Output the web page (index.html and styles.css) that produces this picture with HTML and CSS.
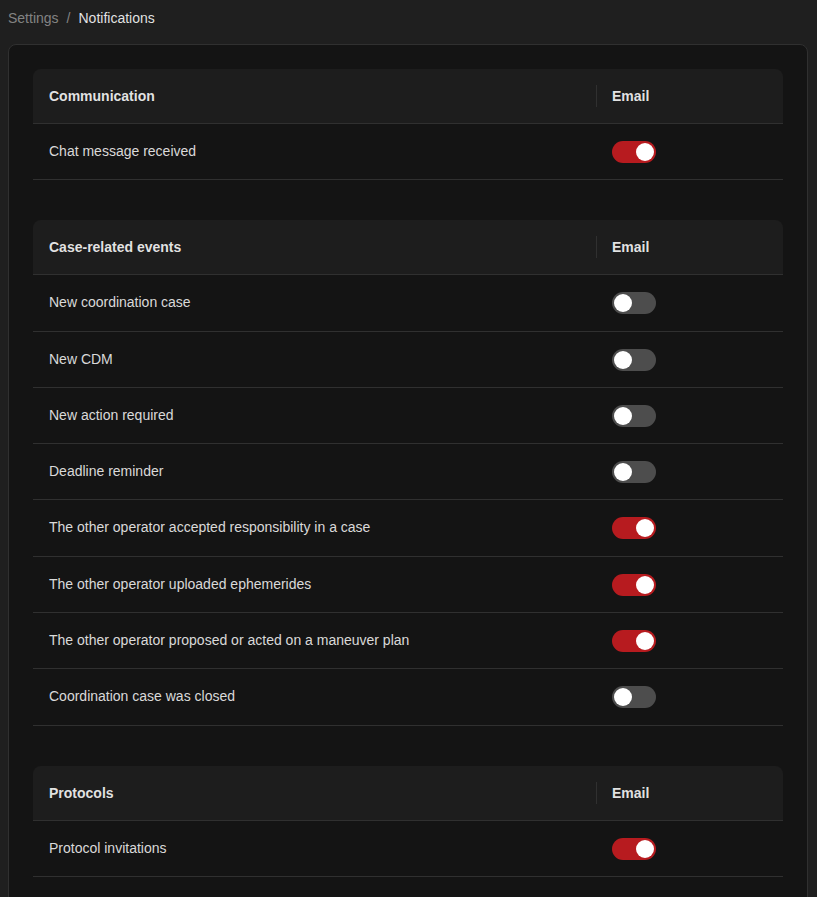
FILE: index.html
```html
<!DOCTYPE html>
<html>
<head>
<meta charset="utf-8">
<link rel="stylesheet" href="styles.css">
</head>
<body>
<nav class="crumbs"><span class="crumb-link">Settings</span><span class="sep">/</span><span class="crumb-current">Notifications</span></nav>
<main class="card">
  <section class="table">
    <div class="thead"><div class="cell name">Communication</div><div class="cell col">Email</div></div>
    <div class="row"><div class="cell name">Chat message received</div><div class="cell col"><span class="switch on"></span></div></div>
  </section>
  <section class="table">
    <div class="thead"><div class="cell name">Case-related events</div><div class="cell col">Email</div></div>
    <div class="row"><div class="cell name">New coordination case</div><div class="cell col"><span class="switch"></span></div></div>
    <div class="row"><div class="cell name">New CDM</div><div class="cell col"><span class="switch"></span></div></div>
    <div class="row"><div class="cell name">New action required</div><div class="cell col"><span class="switch"></span></div></div>
    <div class="row"><div class="cell name">Deadline reminder</div><div class="cell col"><span class="switch"></span></div></div>
    <div class="row"><div class="cell name">The other operator accepted responsibility in a case</div><div class="cell col"><span class="switch on"></span></div></div>
    <div class="row"><div class="cell name">The other operator uploaded ephemerides</div><div class="cell col"><span class="switch on"></span></div></div>
    <div class="row"><div class="cell name">The other operator proposed or acted on a maneuver plan</div><div class="cell col"><span class="switch on"></span></div></div>
    <div class="row"><div class="cell name">Coordination case was closed</div><div class="cell col"><span class="switch"></span></div></div>
  </section>
  <section class="table">
    <div class="thead"><div class="cell name">Protocols</div><div class="cell col">Email</div></div>
    <div class="row"><div class="cell name">Protocol invitations</div><div class="cell col"><span class="switch on"></span></div></div>
  </section>
</main>
</body>
</html>
```
FILE: styles.css
```css
html, body {
  margin: 0;
  background: #1f1f1f;
}
body {
  padding: 7px 9px 0 8px;
  font-family: "Liberation Sans", Arial, sans-serif;
  font-size: 14px;
  color: rgba(255,255,255,0.85);
}
.crumbs {
  line-height: 22px;
  margin-bottom: 15px;
  display: flex;
}
.crumb-link { color: rgba(255,255,255,0.45); }
.sep { color: rgba(255,255,255,0.45); margin: 0 8px; }
.crumb-current { color: rgba(255,255,255,0.88); }
.card {
  background: #141414;
  border: 1px solid #303030;
  border-radius: 8px;
  padding: 24px 24px 40px;
  display: flex;
  flex-direction: column;
  gap: 40px;
  min-height: 900px;
}
.table {
  display: flex;
  flex-direction: column;
}
.thead, .row {
  display: grid;
  grid-template-columns: 1fr 187px;
  border-bottom: 1px solid #303030;
}
.thead {
  background: #1d1d1d;
  border-radius: 8px 8px 0 0;
  font-weight: bold;
  color: rgba(255,255,255,0.88);
}
.cell {
  padding: 16px;
  line-height: 22px;
  display: flex;
  align-items: center;
  position: relative;
}
.row .cell { padding: 16px 16px 17.3px; }
.thead .col::before {
  content: "";
  position: absolute;
  left: 0;
  top: 50%;
  transform: translateY(-50%);
  width: 1px;
  height: 22px;
  background: #303030;
}
.switch {
  display: inline-block;
  width: 44px;
  height: 22px;
  border-radius: 11px;
  background: #4d4d4d;
  position: relative;
  top: 1px;
}
.switch::after {
  content: "";
  position: absolute;
  top: 2px;
  left: 2px;
  width: 18px;
  height: 18px;
  border-radius: 50%;
  background: #fff;
}
.switch.on { background: #b71b1f; }
.switch.on::after { left: 24px; }
```
